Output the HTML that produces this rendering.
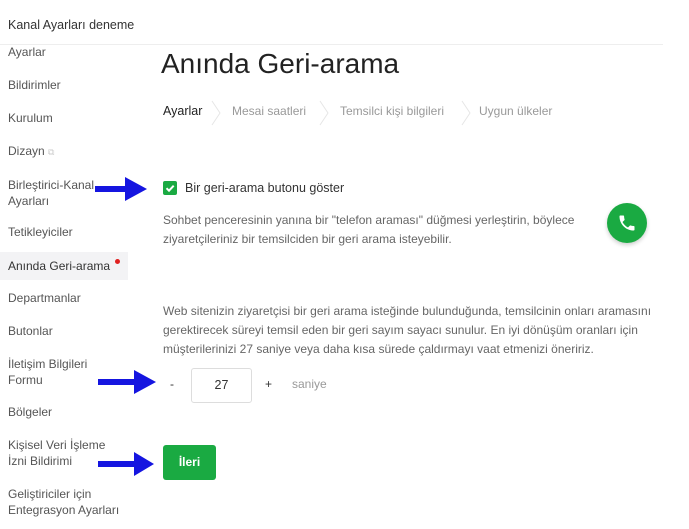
<!DOCTYPE html>
<html><head><meta charset="utf-8"><style>
body{margin:0;width:689px;height:529px;background:#fff;font-family:"Liberation Sans",sans-serif;position:relative;overflow:hidden;color:#333}
.a{position:absolute;white-space:nowrap}
.s{font-size:12px;color:#555;left:8px;line-height:16px}
.g{color:#666;font-size:12px}
.t{font-size:12px;color:#666;line-height:19px}
.arr{position:absolute}
</style></head><body>
<div class="a" style="left:8px;top:18px;font-size:12.5px;color:#333">Kanal Ayarları deneme</div>
<div class="a" style="left:0;top:44px;width:663px;height:1px;background:#eee"></div>
<div class="a s" style="top:44px">Ayarlar</div>
<div class="a s" style="top:77px">Bildirimler</div>
<div class="a s" style="top:110px">Kurulum</div>
<div class="a s" style="top:143px">Dizayn <span style="color:#ccc;font-size:9px">⧉</span></div>
<div class="a s" style="top:177px">Birleştirici-Kanal<br>Ayarları</div>
<div class="a s" style="top:224px">Tetikleyiciler</div>
<div class="a" style="left:0;top:252px;width:128px;height:28px;background:#f3f3f5"></div>
<div class="a s" style="top:258px;color:#333">Anında Geri-arama <span style="display:inline-block;width:5px;height:5px;border-radius:50%;background:#e02020;vertical-align:6px;margin-left:2px"></span></div>
<div class="a s" style="top:290px">Departmanlar</div>
<div class="a s" style="top:323px">Butonlar</div>
<div class="a s" style="top:356px">İletişim Bilgileri<br>Formu</div>
<div class="a s" style="top:404px">Bölgeler</div>
<div class="a s" style="top:437px">Kişisel Veri İşleme<br>İzni Bildirimi</div>
<div class="a s" style="top:486px">Geliştiriciler için<br>Entegrasyon Ayarları</div>

<div class="a" style="left:161px;top:48px;font-size:28px;color:#222">Anında Geri-arama</div>
<div class="a" style="left:163px;top:104px;font-size:12.5px;color:#222">Ayarlar</div>
<div class="a g" style="left:232px;top:104px;color:#999">Mesai saatleri</div>
<div class="a g" style="left:340px;top:104px;color:#999">Temsilci kişi bilgileri</div>
<div class="a g" style="left:479px;top:104px;color:#999">Uygun ülkeler</div>
<svg class="a" style="left:210px;top:100px" width="280" height="26"><g fill="none" stroke="#e6e6e6"><path d="M2 1l8 12-8 12"/><path d="M110 1l8 12-8 12"/><path d="M252 1l8 12-8 12"/></g></svg>

<svg class="a" style="left:163px;top:181px" width="14" height="14"><rect width="14" height="14" rx="2" fill="#1aaa42"/><path d="M3.5 7.2l2.5 2.5 4.7-5" stroke="#fff" stroke-width="2" fill="none"/></svg>
<div class="a" style="left:185px;top:181px;font-size:12.5px;color:#333">Bir geri-arama butonu göster</div>
<div class="a t" style="left:163px;top:211px">Sohbet penceresinin yanına bir "telefon araması" düğmesi yerleştirin, böylece<br>ziyaretçileriniz bir temsilciden bir geri arama isteyebilir.</div>
<div class="a" style="left:607px;top:203px;width:40px;height:40px;border-radius:50%;background:#1aaa42;box-shadow:0 2px 4px rgba(0,0,0,.2)"></div>
<svg class="a" style="left:617px;top:213px" width="20" height="20" viewBox="0 0 24 24"><path fill="#fff" d="M6.6 10.8c1.4 2.8 3.8 5.1 6.6 6.6l2.2-2.2c.3-.3.7-.4 1-.2 1.1.4 2.3.6 3.6.6.6 0 1 .4 1 1V20c0 .6-.4 1-1 1C10.6 21 3 13.4 3 4c0-.6.4-1 1-1h3.5c.6 0 1 .4 1 1 0 1.3.2 2.5.6 3.6.1.3 0 .7-.2 1z"/></svg>

<div class="a t" style="left:163px;top:302px">Web sitenizin ziyaretçisi bir geri arama isteğinde bulunduğunda, temsilcinin onları aramasını<br>gerektirecek süreyi temsil eden bir geri sayım sayacı sunulur. En iyi dönüşüm oranları için<br>müşterilerinizi 27 saniye veya daha kısa sürede çaldırmayı vaat etmenizi öneririz.</div>
<div class="a" style="left:170px;top:377px;font-size:12px;color:#333">-</div>
<div class="a" style="left:191px;top:368px;width:59px;height:33px;border:1px solid #ddd;border-radius:3px;text-align:center;line-height:33px;font-size:12.5px;color:#333">27</div>
<div class="a" style="left:265px;top:377px;font-size:12px;color:#333">+</div>
<div class="a" style="left:292px;top:377px;font-size:12px;color:#999">saniye</div>
<div class="a" style="left:163px;top:445px;width:53px;height:35px;background:#1aaa42;border-radius:3px;color:#fff;font-weight:bold;font-size:12px;text-align:center;line-height:35px">İleri</div>

<svg class="a" style="left:95px;top:175px" width="60" height="28"><path d="M0 11h30V2l22 12-22 12v-9H0z" fill="#1515e0"/></svg>
<svg class="a" style="left:98px;top:369px" width="60" height="28"><path d="M0 10h36V1l22 12-22 12v-9H0z" fill="#1515e0"/></svg>
<svg class="a" style="left:98px;top:451px" width="60" height="28"><path d="M0 10h36V1l20 12-20 12v-9H0z" fill="#1515e0"/></svg>
</body></html>
